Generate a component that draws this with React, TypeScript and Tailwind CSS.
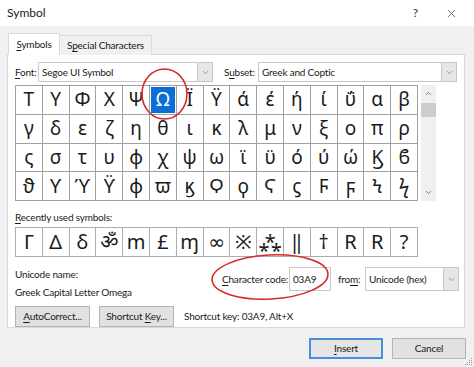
import { ChevronDown, ChevronUp, X } from 'lucide-react';
import { FC, JSX, ReactNode } from 'react';

const UI_FONT = "font-['Lato','Open_Sans',sans-serif]";
const SYM_FONT = "font-['Noto_Sans','DejaVu_Sans','Noto_Sans_CJK_SC',sans-serif] tracking-normal";

const gridRows: string[][] = [
  ['Τ', 'Υ', 'Φ', 'Χ', 'Ψ', 'Ω', 'Ϊ', 'Ϋ', 'ά', 'έ', 'ή', 'ί', 'ΰ', 'α', 'β'],
  ['γ', 'δ', 'ε', 'ζ', 'η', 'θ', 'ι', 'κ', 'λ', 'μ', 'ν', 'ξ', 'ο', 'π', 'ρ'],
  ['ς', 'σ', 'τ', 'υ', 'φ', 'χ', 'ψ', 'ω', 'ϊ', 'ϋ', 'ό', 'ύ', 'ώ', 'Ϗ', 'ϐ'],
  ['ϑ', 'ϒ', 'ϓ', 'ϔ', 'ϕ', 'ϖ', 'ϗ', 'Ϙ', 'ϙ', 'Ϛ', 'ϛ', 'Ϝ', 'ϝ', 'Ϟ', 'ϟ'],
];

const recentSymbols = ['Γ', 'Δ', 'δ', 'ॐ', 'm', '£', 'ɱ', '∞', '※', '⁂', '‖', '†', 'R', 'R', '?'];

// underlined access-key letter
const Key: FC<{ children: ReactNode }> = ({ children }) => <span className="underline underline-offset-2">{children}</span>;

const Select: FC<{ value: string; className: string }> = ({ value, className }) => (
  <div className={`flex h-[20px] items-stretch border border-[#c8c8c8] bg-white ${className}`}>
    <div className="flex flex-1 items-center truncate pl-[3px] text-[#1a1a1a]">{value}</div>
    <div className="flex w-[15px] items-center justify-center border-l border-[#c8c8c8] bg-[#e6e6e6]">
      <ChevronDown className="size-[9px] text-[#606060]" strokeWidth={1.5} />
    </div>
  </div>
);

const Button: FC<{ children: ReactNode; className?: string; primary?: boolean }> = ({ children, className, primary }) => (
  <div
    className={`flex h-[21px] items-center justify-center whitespace-nowrap text-[#1a1a1a] ${
      primary ? 'border-2 border-[#4a8fdc] bg-[#e5e5e5]' : 'border border-[#b4b4b4] bg-[#e1e1e1]'
    } ${className ?? ''}`}
  >
    {children}
  </div>
);

export default function App(): JSX.Element {
  return (
    <div
      className={`relative h-[367px] w-[474px] overflow-hidden bg-[#f0f0f0] ${UI_FONT} text-[10px] tracking-[-0.2px] text-[#1a1a1a]`}
    >
      {/* Title bar */}
      <div className="flex h-[26px] items-center bg-white pl-[7px] tracking-normal">
        <span className="text-[12px]">Symbol</span>
        <span className="ml-auto mr-[27px] text-[12px] text-[#333]">?</span>
        <X className="mr-[16px] size-[13px] text-[#333]" strokeWidth={1.2} />
      </div>

      {/* Tabs */}
      <div className="mt-[7px] flex pl-[8px]">
        <div className="relative z-10 flex h-[22px] w-[52px] items-center justify-center border border-b-0 border-[#d9d9d9] bg-white">
          <span>
            <Key>S</Key>ymbols
          </span>
        </div>
        <div className="mt-[2px] flex h-[20px] w-[92px] items-center justify-center border border-b-0 border-l-0 border-[#d9d9d9] bg-[#f0f0f0]">
          <span>
            S<Key>p</Key>ecial Characters
          </span>
        </div>
      </div>

      {/* Tab panel */}
      <div className="-mt-px ml-[7px] flex h-[274px] w-[458px] flex-col border border-[#d9d9d9] bg-white pl-[7px] pt-[7px]">
        <div className="flex items-center">
          <span className="w-[23px]">
            <Key>F</Key>ont:
          </span>
          <Select value="Segoe UI Symbol" className="w-[175px]" />
          <span className="ml-[11px] w-[34px]">
            S<Key>u</Key>bset:
          </span>
          <Select value="Greek and Coptic" className="w-[199px]" />
        </div>

        {/* Character grid */}
        <div className="mt-[3px] flex">
          <div className={`grid w-[403px] grid-cols-15 border-l border-t border-[#a0a0a0] ${SYM_FONT}`}>
            {gridRows.flat().map((ch, i) => (
              <div
                key={i}
                className={`flex h-[28.75px] items-center justify-center border-b border-r border-[#a0a0a0] text-[19px] leading-none ${
                  i === 5 ? 'p-px' : ''
                }`}
              >
                {i === 5 ? (
                  <div className="flex h-full w-full items-center justify-center bg-[#0a6fd6] text-white">{ch}</div>
                ) : (
                  ch
                )}
              </div>
            ))}
          </div>
          <div className="ml-[3px] flex w-[15px] flex-col items-center bg-[#f0f0f0]">
            <ChevronUp className="mt-[4px] size-[9px] text-[#555]" strokeWidth={2} />
            <div className="mt-[5px] h-[14px] w-[15px] bg-[#cdcdcd]" />
            <ChevronDown className="mb-[4px] mt-auto size-[9px] text-[#555]" strokeWidth={2} />
          </div>
        </div>

        <div className="mt-[9px] leading-[14px]">
          <Key>R</Key>ecently used symbols:
        </div>

        <div className={`mt-[3px] flex ${SYM_FONT}`}>
          {recentSymbols.map((ch, i) => (
            <div
              key={i}
              className="-mr-px flex h-[30px] w-[27.8px] items-center justify-center border border-[#adadad] bg-white text-[20px] leading-none"
            >
              {ch}
            </div>
          ))}
        </div>

        {/* Unicode name / character code */}
        <div className="mt-[10px] flex">
          <div className="flex w-[207px] flex-col leading-[14px]">
            <span>Unicode name:</span>
            <span className="mt-[4px]">Greek Capital Letter Omega</span>
          </div>
          <div className="flex h-[24px] items-center whitespace-nowrap">
            <span className="w-[67px]">
              <Key>C</Key>haracter code:
            </span>
            <div className="flex h-[24px] w-[42px] items-start border border-[#c8c8c8] pl-[3px] pt-[4px]">03A9</div>
            <span className="ml-[7px] w-[27px]">
              fro<Key>m</Key>:
            </span>
            <Select value="Unicode (hex)" className="h-[24px] w-[94px]" />
          </div>
        </div>

        <div className="mt-[7px] flex items-center">
          <Button className="w-[75px]">
            <span>
              <Key>A</Key>utoCorrect...
            </span>
          </Button>
          <Button className="ml-[9px] w-[75px]">
            <span>
              Shortcut <Key>K</Key>ey...
            </span>
          </Button>
          <span className="ml-[10px]">Shortcut key: 03A9, Alt+X</span>
        </div>
      </div>

      {/* Footer buttons */}
      <div className="mt-[10px] flex justify-end pr-[8px]">
        <Button primary className="w-[74px]">
          <span>
            <Key>I</Key>nsert
          </span>
        </Button>
        <Button className="ml-[9px] w-[74px]">Cancel</Button>
      </div>

      {/* Resize grip */}
      <svg className="absolute bottom-[1px] right-[1px]" width="10" height="10" viewBox="0 0 10 10">
        <g fill="#9a9a9a">
          <rect x="8" y="2" width="1" height="1" />
          <rect x="6" y="4" width="1" height="1" />
          <rect x="8" y="4" width="1" height="1" />
          <rect x="4" y="6" width="1" height="1" />
          <rect x="6" y="6" width="1" height="1" />
          <rect x="8" y="6" width="1" height="1" />
          <rect x="2" y="8" width="1" height="1" />
          <rect x="4" y="8" width="1" height="1" />
          <rect x="6" y="8" width="1" height="1" />
          <rect x="8" y="8" width="1" height="1" />
        </g>
      </svg>

      {/* Red annotation ellipses drawn over the dialog */}
      <svg className="pointer-events-none absolute left-0 top-0" width="474" height="367">
        <ellipse cx="164.5" cy="94" rx="22.5" ry="25" fill="none" stroke="#d62a2a" strokeWidth="1.6" />
        <ellipse cx="270" cy="277" rx="58" ry="22" fill="none" stroke="#d62a2a" strokeWidth="1.6" transform="rotate(-3 270 277)" />
      </svg>
    </div>
  );
}
